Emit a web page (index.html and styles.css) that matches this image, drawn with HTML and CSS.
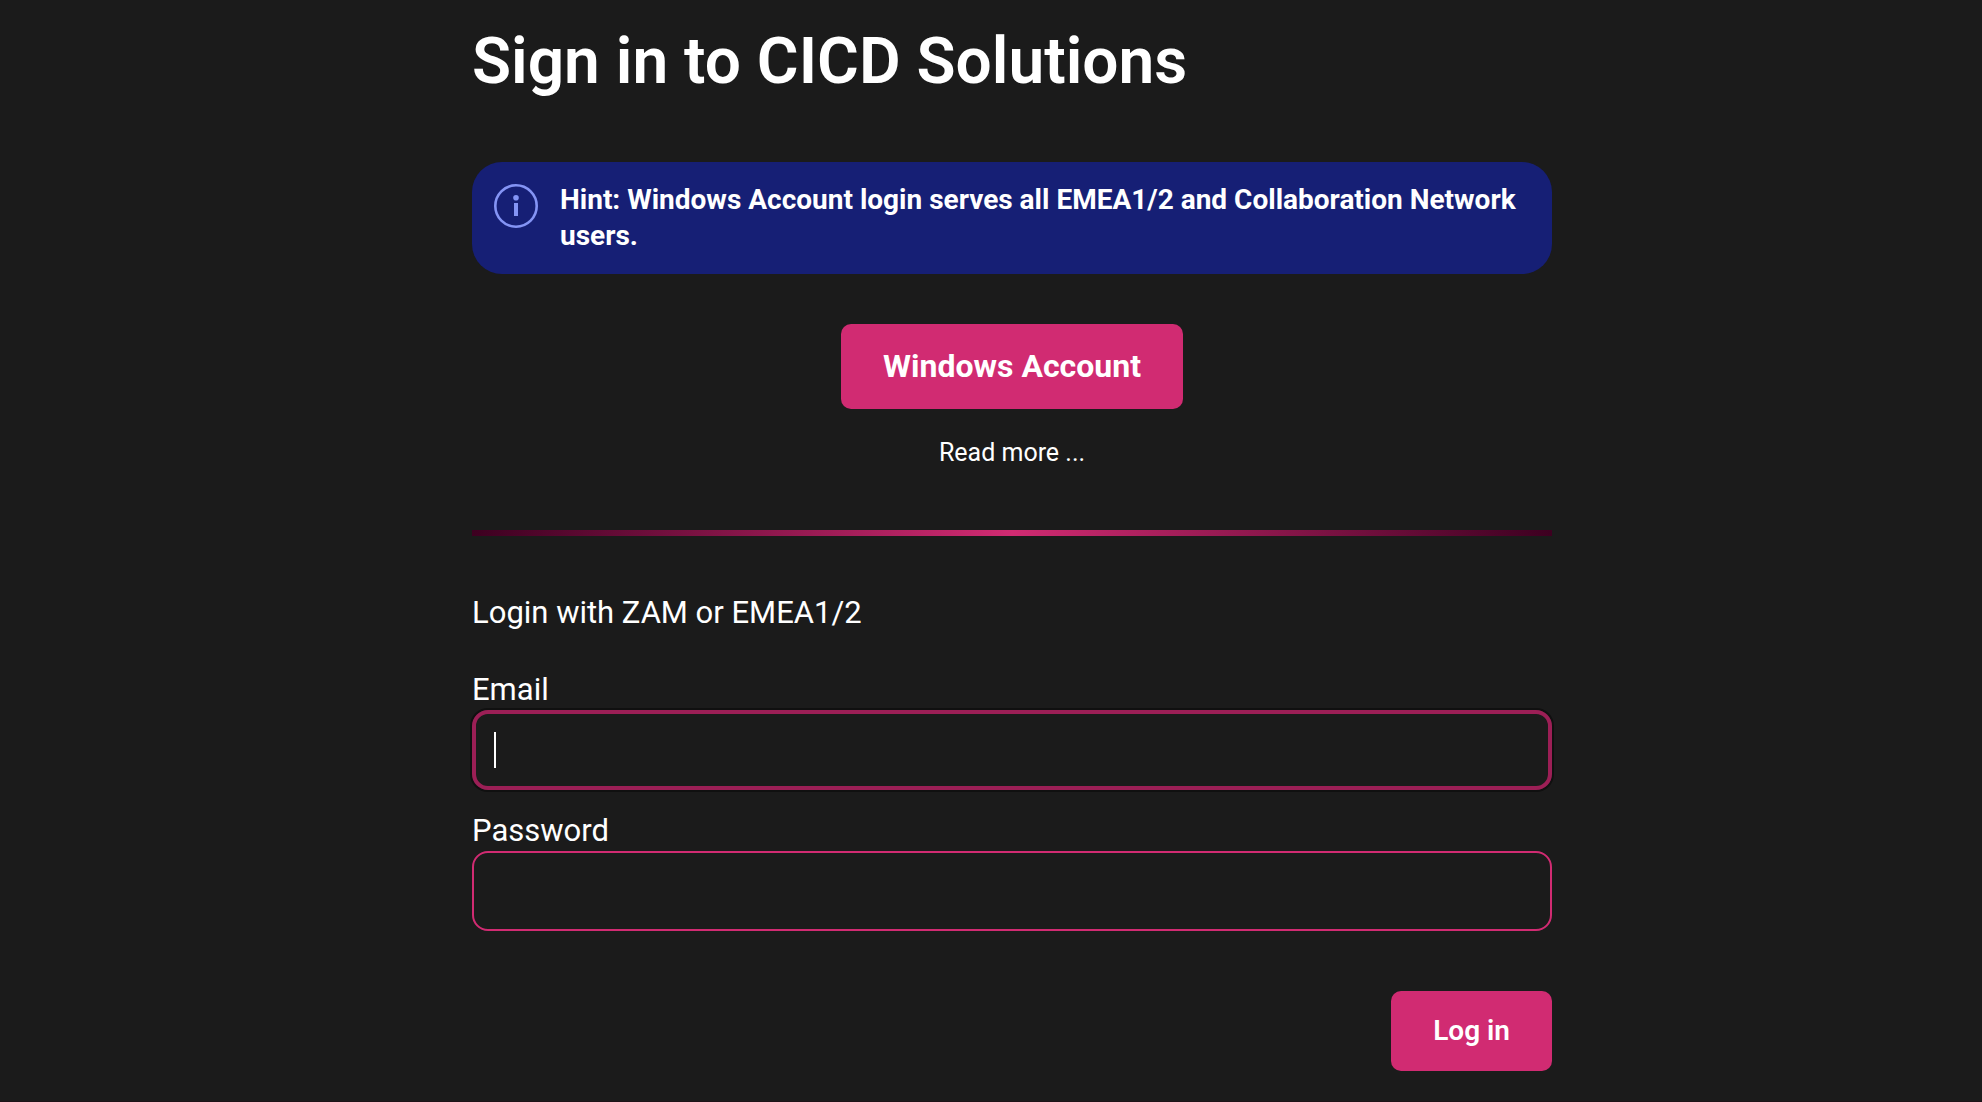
FILE: index.html
```html
<!DOCTYPE html>
<html lang="en">
<head>
<meta charset="utf-8">
<meta name="viewport" content="width=device-width, initial-scale=1">
<title>Sign in to CICD Solutions</title>
<link rel="stylesheet" href="styles.css">
</head>
<body>
<main class="signin">
  <h1 class="title">Sign in to CICD Solutions</h1>
  <div class="hint" role="note">
    <svg class="hint-icon" viewBox="0 0 44 44" aria-hidden="true">
      <circle cx="22" cy="22" r="20.7" fill="none" stroke="currentColor" stroke-width="2.6"/>
      <circle cx="22" cy="13.8" r="2.8" fill="currentColor"/>
      <rect x="20" y="19" width="4" height="13" fill="currentColor"/>
    </svg>
    <p class="hint-text">Hint: Windows Account login serves all EMEA1/2 and Collaboration Network users.</p>
  </div>
  <div class="provider">
    <button class="button button-large" type="button">Windows Account</button>
    <a class="more" href="#">Read more ...</a>
  </div>
  <hr class="divider">
  <form class="form">
    <p class="form-title">Login with ZAM or EMEA1/2</p>
    <div class="field">
      <label class="label" for="email">Email</label>
      <div class="control">
        <input class="input input-active" id="email" type="text">
        <span class="caret"></span>
      </div>
    </div>
    <div class="field">
      <label class="label" for="password">Password</label>
      <input class="input" id="password" type="password">
    </div>
    <div class="actions">
      <button class="button" type="submit">Log in</button>
    </div>
  </form>
</main>
</body>
</html>
```

FILE: styles.css
```css
* {
  box-sizing: border-box;
}

body {
  margin: 0;
  min-height: 100vh;
  background: #1b1b1b;
  border-bottom: 1px solid #1d1317;
  color: #fff;
  font-family: Roboto, "Liberation Sans", sans-serif;
  font-size: 31px;
  line-height: 41px;
}

.signin {
  max-width: 1164px;
  margin: 0 auto;
  padding: 22px 21px 28px 63px;
}

.title {
  margin: 0;
  font-size: 64px;
  font-weight: 600;
  line-height: 80px;
}

.hint {
  display: flex;
  gap: 22px;
  margin-top: 60px;
  padding: 20px 0 20px 22px;
  border-radius: 30px;
  background: #161f75;
}

.hint-icon {
  flex: none;
  width: 44px;
  height: 44px;
  margin-top: 2px;
  color: #8494f5;
}

.hint-text {
  margin: 0;
  font-size: 28px;
  font-weight: 700;
  line-height: 36px;
}

.provider {
  display: flex;
  flex-direction: column;
  align-items: center;
  gap: 25px;
  margin-top: 50px;
}

.button {
  padding: 20px 42px;
  border: 0;
  border-radius: 10px;
  background: #d12b72;
  color: #fff;
  font: inherit;
  font-size: 28px;
  font-weight: 600;
  line-height: 40px;
}

.button-large {
  padding: 22px 42px;
  font-size: 32px;
  font-weight: 700;
  line-height: 41px;
}

.more {
  color: #fff;
  font-size: 25px;
  line-height: 38px;
  text-decoration: none;
}

.divider {
  height: 6px;
  margin: 58px 0 0;
  border: 0;
  background: linear-gradient(90deg, #3d0020, #d12b72 50%, #3d0020);
}

.form {
  margin-top: 56px;
}

.form-title {
  margin: 0 0 36px;
}

.field {
  margin-bottom: 20px;
}

.label {
  display: block;
}

.control {
  position: relative;
}

.input {
  display: block;
  width: 100%;
  height: 80px;
  padding: 0 20px;
  border: 2px solid #d12b72;
  border-radius: 16px;
  outline: 0;
  background: transparent;
  color: #fff;
  font: inherit;
}

.input-active {
  border: 4px solid #9c1f56;
  box-shadow: 0 0 0 2px #101010;
}

.caret {
  position: absolute;
  top: 22px;
  left: 22px;
  width: 2px;
  height: 36px;
  background: #fff;
}

.actions {
  display: flex;
  justify-content: flex-end;
  margin-top: 60px;
}
```
